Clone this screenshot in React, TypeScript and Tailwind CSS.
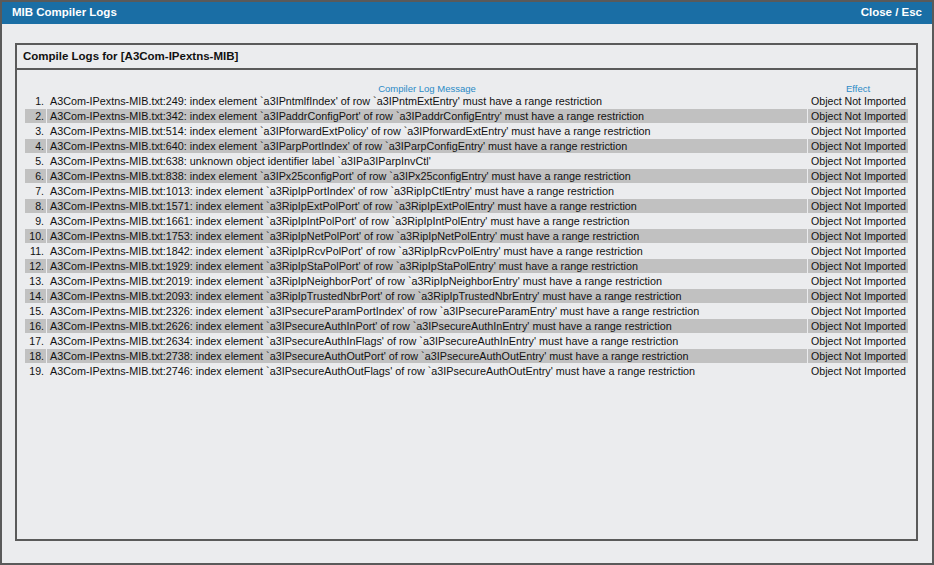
import React from "react";

const logs = [
  "A3Com-IPextns-MIB.txt:249: index element `a3IPntmlfIndex' of row `a3IPntmExtEntry' must have a range restriction",
  "A3Com-IPextns-MIB.txt:342: index element `a3IPaddrConfigPort' of row `a3IPaddrConfigEntry' must have a range restriction",
  "A3Com-IPextns-MIB.txt:514: index element `a3IPforwardExtPolicy' of row `a3IPforwardExtEntry' must have a range restriction",
  "A3Com-IPextns-MIB.txt:640: index element `a3IParpPortIndex' of row `a3IParpConfigEntry' must have a range restriction",
  "A3Com-IPextns-MIB.txt:638: unknown object identifier label `a3IPa3IParpInvCtl'",
  "A3Com-IPextns-MIB.txt:838: index element `a3IPx25configPort' of row `a3IPx25configEntry' must have a range restriction",
  "A3Com-IPextns-MIB.txt:1013: index element `a3RipIpPortIndex' of row `a3RipIpCtlEntry' must have a range restriction",
  "A3Com-IPextns-MIB.txt:1571: index element `a3RipIpExtPolPort' of row `a3RipIpExtPolEntry' must have a range restriction",
  "A3Com-IPextns-MIB.txt:1661: index element `a3RipIpIntPolPort' of row `a3RipIpIntPolEntry' must have a range restriction",
  "A3Com-IPextns-MIB.txt:1753: index element `a3RipIpNetPolPort' of row `a3RipIpNetPolEntry' must have a range restriction",
  "A3Com-IPextns-MIB.txt:1842: index element `a3RipIpRcvPolPort' of row `a3RipIpRcvPolEntry' must have a range restriction",
  "A3Com-IPextns-MIB.txt:1929: index element `a3RipIpStaPolPort' of row `a3RipIpStaPolEntry' must have a range restriction",
  "A3Com-IPextns-MIB.txt:2019: index element `a3RipIpNeighborPort' of row `a3RipIpNeighborEntry' must have a range restriction",
  "A3Com-IPextns-MIB.txt:2093: index element `a3RipIpTrustedNbrPort' of row `a3RipIpTrustedNbrEntry' must have a range restriction",
  "A3Com-IPextns-MIB.txt:2326: index element `a3IPsecureParamPortIndex' of row `a3IPsecureParamEntry' must have a range restriction",
  "A3Com-IPextns-MIB.txt:2626: index element `a3IPsecureAuthInPort' of row `a3IPsecureAuthInEntry' must have a range restriction",
  "A3Com-IPextns-MIB.txt:2634: index element `a3IPsecureAuthInFlags' of row `a3IPsecureAuthInEntry' must have a range restriction",
  "A3Com-IPextns-MIB.txt:2738: index element `a3IPsecureAuthOutPort' of row `a3IPsecureAuthOutEntry' must have a range restriction",
  "A3Com-IPextns-MIB.txt:2746: index element `a3IPsecureAuthOutFlags' of row `a3IPsecureAuthOutEntry' must have a range restriction",
];

const LogRow = ({ index, msg }: { index: number; msg: string }) => {
  const striped = index % 2 === 1;
  const cell = striped ? "bg-[#c1c1c1]" : "";
  return (
    <div className="grid grid-cols-[21px_1fr_100px] gap-x-px h-[14px] leading-[14px]">
      <div className={`${cell} text-right pr-[2px]`}>{index + 1}.</div>
      <div className={`${cell} pl-[3px] text-[10.8px] whitespace-nowrap overflow-hidden`}>{msg}</div>
      <div className={`${cell} pl-[3px] whitespace-nowrap`}>Object Not Imported</div>
    </div>
  );
};

export default function App() {
  return (
    <div
      className="w-[934px] h-[565px] border-2 border-[#5a5a5a] bg-[#ebecee] flex flex-col text-[#111]"
      style={{ fontFamily: '"Liberation Sans", Arial, sans-serif' }}
    >
      {/* Title bar */}
      <div className="h-[22px] bg-[#1a6ea5] flex items-center justify-between pl-[10px] pr-[10px] text-white font-bold text-[11.5px]">
        <span>MIB Compiler Logs</span>
        <span className="cursor-pointer">Close / Esc</span>
      </div>

      <div className="flex-1 pt-[19px] pl-[13px] pr-[14px] pb-[22px] flex">
        <div className="flex-1 border-2 border-[#5a5a5a] flex flex-col">
          <div className="h-[25px] border-b-2 border-[#5a5a5a] flex items-center pl-[6px] pt-px font-bold text-[11.5px]">
            Compile Logs for [A3Com-IPextns-MIB]
          </div>

          <div className="pt-[13px] pl-[8px] pr-[8px] text-[10.6px] flex flex-col gap-y-px">
            <div className="grid grid-cols-[21px_1fr_100px] gap-x-px h-[10px] leading-[12px] text-[9.5px] text-[#2a8ac6]">
              <div></div>
              <div className="text-center">Compiler Log Message</div>
              <div className="text-center">Effect</div>
            </div>
            {logs.map((msg, i) => (
              <LogRow key={i} index={i} msg={msg} />
            ))}
          </div>
        </div>
      </div>
    </div>
  );
}
